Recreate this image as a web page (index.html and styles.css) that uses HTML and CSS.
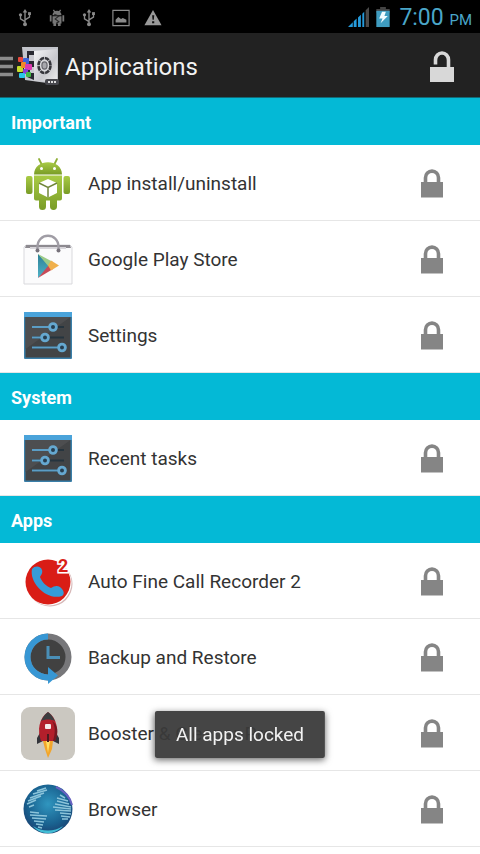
FILE: index.html
```html
<!DOCTYPE html>
<html lang="en">
<head>
<meta charset="UTF-8">
<meta name="viewport" content="width=device-width, initial-scale=1.0">
<title>Applications</title>
<link rel="stylesheet" href="styles.css">
</head>
<body>

	<!-- shared icons -->
	<svg class="sprite" aria-hidden="true">
		<symbol id="lock" viewBox="0 0 24 30">
			<path d="M5.500 14V8.800a6.500 6.700 0 0 1 13 0V14" fill="none" stroke="currentColor" stroke-width="3.600"/>
			<rect x="1" y="13" width="22" height="15.500" fill="currentColor"/>
		</symbol>
		<symbol id="usb" viewBox="0 0 16 20">
			<g fill="none" stroke="currentColor" stroke-width="1.500">
				<path d="M8 3v13M8 14L3 11V7M8 12l5-3V5"/>
			</g>
			<path d="M8 0l2.500 4h-5z" fill="currentColor"/>
			<circle cx="8" cy="17" r="2.200" fill="currentColor"/>
			<circle cx="3" cy="6.500" r="1.800" fill="currentColor"/>
			<rect x="11.400" y="3.500" width="3.200" height="3.200" fill="currentColor"/>
		</symbol>
		<symbol id="sliders" viewBox="0 0 54 54">
			<rect x="3" y="3" width="48" height="47" rx="1" fill="#3a7fa9"/>
			<rect x="3" y="3" width="48" height="5" fill="#4aa3da"/>
			<rect x="4.500" y="8" width="45" height="40.500" fill="#424446"/>
			<path d="M4.500 8h45L4.500 40z" fill="#4d4e50"/>
			<g stroke="#25343e" stroke-width="2">
				<path d="M11 18h32M11 28.500h32M11 38.500h32"/>
			</g>
			<g stroke="#5b9dc5" stroke-width="2">
				<path d="M11 18h20M11 28.500h12M11 38.500h29"/>
			</g>
			<g fill="#263e50" stroke="#65a8d0" stroke-width="2.800">
				<circle cx="32" cy="18" r="3.400"/>
				<circle cx="24" cy="28.500" r="3.400"/>
				<circle cx="41" cy="38.500" r="3.400"/>
			</g>
		</symbol>
	</svg>

	<div class="statusbar">
		<div class="notices">
			<svg class="notice"><use href="#usb"/></svg>
			<svg class="notice" viewBox="0 0 16 20">
				<path d="M3 7a5 5 0 0 1 10 0zM3 8h10v8H3zM0 7h2v7H0zM14 7h2v7h-2zM4 16h3v3H4zM9 16h3v3H9z" fill="#777"/>
				<path d="M4 1l2 3M12 1l-2 3" stroke="#777" stroke-width="1.500"/>
				<path d="M5 6l5 2-4 3 4 3-3 2" fill="none" stroke="#292929" stroke-width="1.300"/>
			</svg>
			<svg class="notice"><use href="#usb"/></svg>
			<svg class="notice" viewBox="0 0 20 20">
				<path d="M1 1.500h18v17H1z" fill="none" stroke="currentColor" stroke-width="1.300"/>
				<path d="M4 15v-3l3-3 3 2 2-1 4 2v3z" fill="currentColor"/>
			</svg>
			<svg class="notice" viewBox="0 0 20 20">
				<path d="M10 1l9.500 17H.500z" fill="#999"/>
				<path d="M9 7h2.400l-.500 5H9.500zM9 13.500h2.400v2.400H9z" fill="#111"/>
			</svg>
		</div>
		<div class="system">
			<svg class="signal" viewBox="0 0 22 22">
				<path d="M0 21l5-5v5zM6 15l3-3v9H6zM10.500 11l3-3v13h-3zM15 7l2-2v16h-2z" fill="#259bdc"/>
				<path d="M18.500 3.500L22 0v21h-3.500z" fill="#4a4a4a"/>
			</svg>
			<svg class="battery" viewBox="0 0 14 22">
				<path d="M4 0h6v2h4v4H0V2h4z" fill="#444"/>
				<path d="M0 4h14v17H0z" fill="#3f9cc0"/>
				<path d="M6 5h4L8.500 9.500H12L4.500 17l2-5H3z" fill="#f2fbff"/>
			</svg>
			<span class="clock">7:00 <small>PM</small></span>
		</div>
	</div>

	<header class="actionbar">
		<button class="menu-btn" type="button" aria-label="Open menu">
			<svg class="menu-icon" viewBox="0 0 14 22">
				<path d="M0 2.500h13M0 10.500h13M0 18.500h13" stroke="#8c8c8c" stroke-width="3.400"/>
			</svg>
		</button>
		<svg class="logo" viewBox="0 0 44 42">
			<defs>
				<linearGradient id="steel" x1="0" y1="0" x2="1" y2="1">
					<stop offset="0" stop-color="#f6f6f8"/>
					<stop offset=".6" stop-color="#c8c8cd"/>
					<stop offset="1" stop-color="#eee"/>
				</linearGradient>
			</defs>
			<path d="M5 1h36v33l-11 3-22-3z" fill="#c3c5cb"/>
			<path d="M10 5h7v29l-7-3z" fill="#292932"/>
			<path d="M12 9h5v6h-5zM13 21h4v6h-4z" fill="#c9c9d0"/>
			<path d="M17 5l23-2v33l-23-1z" fill="url(#steel)"/>
			<ellipse cx="27.500" cy="19.500" rx="6" ry="7.500" fill="#d8d8dc" stroke="#34343a" stroke-width="2.600" stroke-dasharray="4.500 .800"/>
			<ellipse cx="27.500" cy="19.500" rx="2.600" ry="3.600" fill="#a7a7ad" stroke="#66666d" stroke-width="1.200"/>
			<rect x="1" y="11" width="5" height="5" rx="1" fill="#e9473b"/>
			<rect x="6" y="12" width="6" height="6" rx="1" fill="#3b63d9"/>
			<rect x="0" y="20" width="6" height="6" rx="1" fill="#c7dd2c"/>
			<rect x="4" y="16" width="5" height="6" rx="1" fill="#f08a28"/>
			<rect x="8" y="18" width="7" height="6" rx="1" fill="#dc3bb0"/>
			<rect x="6" y="23" width="5" height="5" rx="1" fill="#8b3bd6"/>
			<rect x="2" y="27" width="6" height="5" rx="1" fill="#27c8e8"/>
			<rect x="9" y="26" width="5" height="5" rx="1" fill="#43b944"/>
			<rect x="28" y="33" width="14" height="6" rx="2" fill="#47474d"/>
			<path d="M31 36h8" stroke="#ddd" stroke-width="2" stroke-dasharray="2 1"/>
		</svg>
		<h1>Applications</h1>
		<button class="unlock-btn" type="button" aria-label="Unlock all apps">
			<svg class="unlock-icon" viewBox="0 0 24 32">
				<path d="M5.500 13.500V9a6 6.500 0 0 1 13 0v8" fill="none" stroke="currentColor" stroke-width="3.600"/>
				<rect x="0" y="16" width="24" height="15" fill="currentColor"/>
			</svg>
		</button>
	</header>

	<main>
		<section>
			<h2>Important</h2>
			<ul class="apps">
				<li>
					<svg class="app-icon" viewBox="0 0 54 54">
						<defs>
							<linearGradient id="droid" x1="0" y1="0" x2="0" y2="1">
								<stop offset="0" stop-color="#a9cb45"/>
								<stop offset="1" stop-color="#799c27"/>
							</linearGradient>
						</defs>
						<path d="M18 2l3 6M36 2l-3 6" stroke="#8eae35" stroke-width="1.800" stroke-linecap="round"/>
						<path d="M13 17.500C13 1 41 1 41 17.500z" fill="url(#droid)"/>
						<circle cx="20.500" cy="11.500" r="1.500" fill="#fff"/>
						<circle cx="33.500" cy="11.500" r="1.500" fill="#fff"/>
						<rect x="5" y="19" width="6.500" height="18" rx="2" fill="url(#droid)"/>
						<rect x="42.500" y="19" width="6.500" height="18" rx="2" fill="url(#droid)"/>
						<path d="M13 18.500h28v23a2 2 0 0 1-2 2h-3v6a3 3 0 0 1-7 0v-6h-4v6a3 3 0 0 1-7 0v-6h-3a2 2 0 0 1-2-2z" fill="url(#droid)"/>
						<path d="M27 22l9 4v10l-9 4.500-9-4.500V26z" fill="#fff"/>
						<path d="M18 26l9 4.500 9-4.500M27 30.500v10" fill="none" stroke="#71863a" stroke-width="1.500"/>
					</svg>
					<span class="name">App install/uninstall</span>
					<button class="lock-btn" type="button" aria-label="Unlock App install/uninstall"><svg class="lock-icon"><use href="#lock"/></svg></button>
				</li>
				<li>
					<svg class="app-icon" viewBox="0 0 54 54">
						<defs>
							<linearGradient id="play" x1="0" y1="0" x2="0" y2="1">
								<stop offset="0" stop-color="#2c7f96"/>
								<stop offset="1" stop-color="#50b3c8"/>
							</linearGradient>
						</defs>
						<path d="M5 12h44l2 2v37H3V14z" fill="#fbfbfc" stroke="#d9d9dd"/>
						<path d="M5 12h44l1 3H4z" fill="#8d8a90"/>
						<path d="M9 14h36v2H9z" fill="#d7d5da"/>
						<path d="M16.500 17v-3c0-15 21-15 21 0v3" fill="none" stroke="#a09da5" stroke-width="2.400"/>
						<circle cx="16.500" cy="17.500" r="2" fill="#77727b"/>
						<circle cx="37.500" cy="17.500" r="2" fill="#77727b"/>
						<path d="M17 21l12 12-12 12z" fill="url(#play)"/>
						<path d="M17 21l15 8-4 5z" fill="#9ccb88"/>
						<path d="M17 45l15-9-4-4z" fill="#c84a58"/>
						<path d="M30 27.500l8 5-8 5-3-5z" fill="#f0b04c"/>
					</svg>
					<span class="name">Google Play Store</span>
					<button class="lock-btn" type="button" aria-label="Unlock Google Play Store"><svg class="lock-icon"><use href="#lock"/></svg></button>
				</li>
				<li>
					<svg class="app-icon"><use href="#sliders"/></svg>
					<span class="name">Settings</span>
					<button class="lock-btn" type="button" aria-label="Unlock Settings"><svg class="lock-icon"><use href="#lock"/></svg></button>
				</li>
			</ul>
		</section>

		<section>
			<h2>System</h2>
			<ul class="apps">
				<li>
					<svg class="app-icon"><use href="#sliders"/></svg>
					<span class="name">Recent tasks</span>
					<button class="lock-btn" type="button" aria-label="Unlock Recent tasks"><svg class="lock-icon"><use href="#lock"/></svg></button>
				</li>
			</ul>
		</section>

		<section>
			<h2>Apps</h2>
			<ul class="apps">
				<li>
					<svg class="app-icon" viewBox="0 0 54 54">
						<circle cx="29" cy="29" r="22.500" fill="#d6b7b7"/>
						<circle cx="28" cy="28" r="22.500" fill="#fff"/>
						<circle cx="27" cy="27" r="22.500" fill="#d91d16"/>
						<path d="M11 14c3-4 9-3 10 1 1 3-1 5-2 7 2 5 6 9 11 11 3-2 6-3 9-1 4 3 5 7 2 9-15 5-33-13-30-27z" fill="#369bd8"/>
						<text class="badge" x="37" y="17">2</text>
					</svg>
					<span class="name">Auto Fine Call Recorder 2</span>
					<button class="lock-btn" type="button" aria-label="Unlock Auto Fine Call Recorder 2"><svg class="lock-icon"><use href="#lock"/></svg></button>
				</li>
				<li>
					<svg class="app-icon" viewBox="0 0 54 54">
						<circle cx="27" cy="26" r="20" fill="#414141"/>
						<circle cx="27" cy="26" r="20.500" fill="none" stroke="#77777a" stroke-width="6"/>
						<path d="M27 5.500a20.500 20.500 0 0 0 0 41" fill="none" stroke="#3797d4" stroke-width="6"/>
						<path d="M27 36l10 8.500L27 53z" fill="#3797d4"/>
						<path d="M27 15v11.500H39" fill="none" stroke="#4a8fb7" stroke-width="3"/>
					</svg>
					<span class="name">Backup and Restore</span>
					<button class="lock-btn" type="button" aria-label="Unlock Backup and Restore"><svg class="lock-icon"><use href="#lock"/></svg></button>
				</li>
				<li>
					<svg class="app-icon" viewBox="0 0 54 54">
						<rect x="0" y="0" width="54" height="53" rx="9" fill="#cbc8c1"/>
						<path d="M22 34h10l-1 8-4 9-3-9z" fill="#f2a52b"/>
						<path d="M25 34h4l-2 12z" fill="#ffe066"/>
						<path d="M20 24l-4 7v6l6-3h10l6 3v-6l-4-7z" fill="#33343a"/>
						<path d="M27 5c9 6 11 18 7 29H20C16 23 18 11 27 5z" fill="#b31f2b"/>
						<path d="M27 5c3 2 5 5 7 9-4-2-10-2-14 0C22 10 24 7 27 5z" fill="#3c3e40"/>
						<path d="M31 14c4 6 3 13 1 20h2c4-9 3-16-3-20z" fill="#741922"/>
						<rect x="24" y="17" width="6" height="5" rx="1" fill="#f4e9e9"/>
						<path d="M26 27h2v8h-2z" fill="#4b1b20"/>
					</svg>
					<span class="name">Booster &amp; Cleaner Pro</span>
					<button class="lock-btn" type="button" aria-label="Unlock Booster &amp; Cleaner Pro"><svg class="lock-icon"><use href="#lock"/></svg></button>
				</li>
				<li>
					<svg class="app-icon" viewBox="0 0 54 54">
						<defs>
							<radialGradient id="sea" cx=".5" cy=".4" r=".6">
								<stop offset="0" stop-color="#3096bf"/>
								<stop offset=".7" stop-color="#19618f"/>
								<stop offset="1" stop-color="#1b4474"/>
							</radialGradient>
						</defs>
						<circle cx="27" cy="26" r="24.500" fill="url(#sea)"/>
						<g fill="none" stroke="#8cc4da" stroke-width="1.500">
							<path d="M16 8l9-3M12 11l14-4M9 15l14-5M7 18l13-5M6 21l9-4M8 24l5-2"/>
							<path d="M9 29l9 1M9 32l17 1M11 35l14 1M13 38l10 1M15 41l7 1M17 44l4 1"/>
							<path d="M39 12l5 3M36 15l11 3M36 18l12 3M34 21l16 3M32 24l18 2M34 27l16 1M39 30l11 1M40 33l9 1M41 36l6 0"/>
						</g>
						<path d="M35 4c9 4 14 10 16 18" fill="none" stroke="#6962c1" stroke-width="2"/>
						<path d="M12 43c9 6 21 6 30 0-7 9-22 10-30 0z" fill="#42bdd5"/>
					</svg>
					<span class="name">Browser</span>
					<button class="lock-btn" type="button" aria-label="Unlock Browser"><svg class="lock-icon"><use href="#lock"/></svg></button>
				</li>
			</ul>
		</section>
	</main>

	<div class="toast" role="status">All apps locked</div>

</body>
</html>
```

FILE: styles.css
```css
* {
	box-sizing: border-box;
}

body {
	margin: 0;
	background: #fff;
	color: #333;
	font-family: Roboto, "Noto Sans", sans-serif;
	font-size: 19px;
}

button {
	display: flex;
	padding: 0;
	border: none;
	background: none;
	color: inherit;
	cursor: pointer;
}

.sprite {
	display: none;
}

/* status bar */
.statusbar {
	display: flex;
	justify-content: space-between;
	align-items: center;
	height: 33px;
	padding: 2px 8px 0 16px;
	background: #000;
	color: #8a8a8a;
}

.notices {
	display: flex;
	gap: 14px;
}

.notice {
	width: 18px;
	height: 18px;
}

.system {
	display: flex;
	align-items: center;
	gap: 7px;
}

.signal {
	width: 21px;
	height: 21px;
}

.battery {
	width: 14px;
	height: 21px;
}

.clock {
	margin-left: 2px;
	color: #4aa6c9;
	font-size: 23px;
}

.clock small {
	font-size: 15px;
}

/* action bar */
.actionbar {
	display: flex;
	align-items: center;
	height: 65px;
	padding: 3px 26px 0 0;
	background: #222;
	border-bottom: 1px solid #126b78;
	color: #f3f3f3;
}

.menu-icon {
	width: 14px;
	height: 22px;
}

.logo {
	width: 44px;
	height: 42px;
	margin: 0 4px 0 3px;
}

h1 {
	flex: 1;
	margin: 0;
	font-size: 24px;
	font-weight: 400;
}

.unlock-btn {
	color: #d8d8d8;
}

.unlock-icon {
	width: 24px;
	height: 32px;
}

/* app list */
h2 {
	margin: 0;
	padding: 2px 11px 0;
	background: #04b9d6;
	color: #fff;
	font-size: 18px;
	font-weight: 700;
	line-height: 45px;
}

.apps {
	margin: 0;
	padding: 0;
	list-style: none;
}

.apps li {
	display: flex;
	align-items: center;
	height: 76px;
	padding: 2px 36px 0 21px;
	border-bottom: 1px solid #e6e6e6;
}

.app-icon {
	width: 54px;
	height: 54px;
}

.name {
	flex: 1;
	margin-left: 13px;
}

.lock-btn {
	color: #858585;
}

.lock-icon {
	width: 24px;
	height: 30px;
}

.badge {
	fill: #d91d16;
	stroke: #fff;
	stroke-width: 3px;
	paint-order: stroke;
	font-size: 18px;
	font-weight: 700;
}

.toast {
	position: fixed;
	bottom: 96px;
	left: 50%;
	transform: translateX(-50%);
	padding: 0 21px;
	background: rgba(57, 57, 57, 0.94);
	border-radius: 2px;
	box-shadow: 0 2px 7px rgba(0, 0, 0, 0.6);
	color: #f2f2f2;
	line-height: 47px;
	white-space: nowrap;
}
```
